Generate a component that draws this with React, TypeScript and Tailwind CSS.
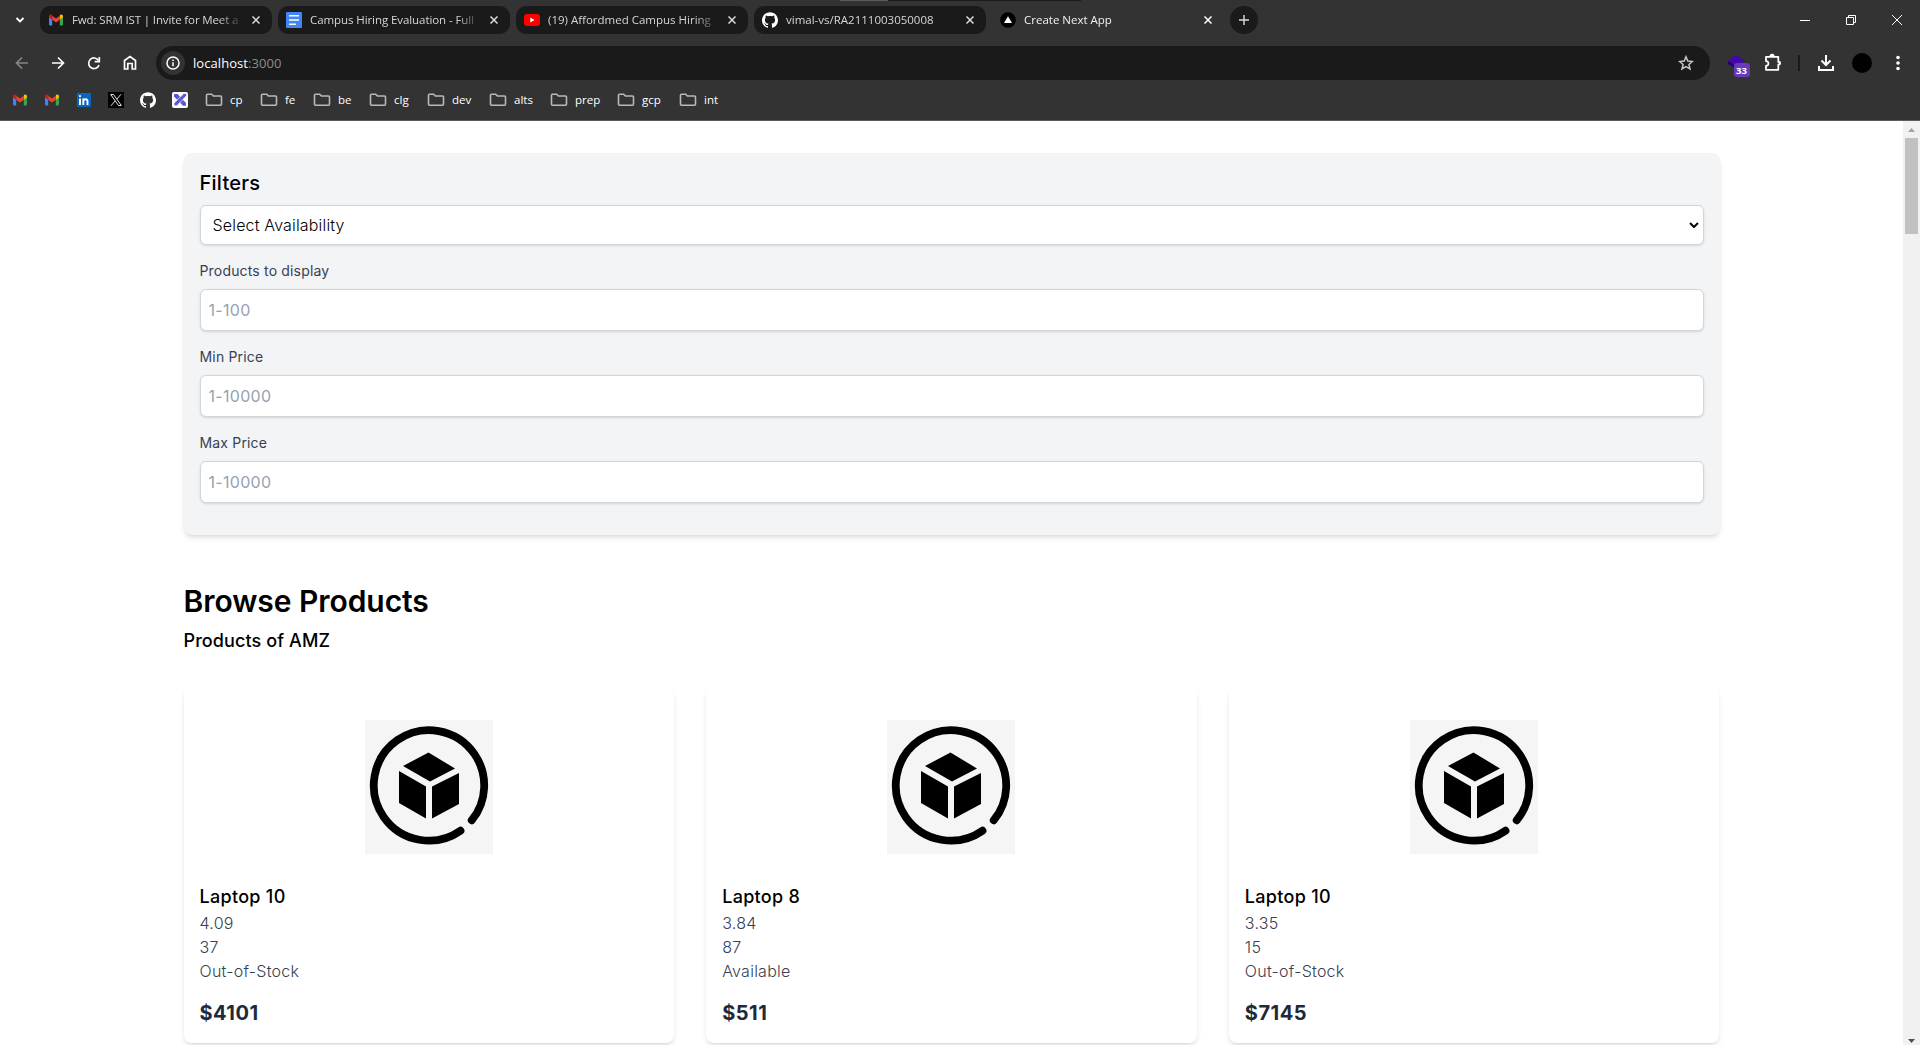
import React from "react";
import { SiGithub } from "react-icons/si";

const ui = "font-['Open_Sans','Noto_Sans',sans-serif]";

function Gmail({ size = 16 }: { size?: number }) {
  return (
    <svg width={size} height={size} viewBox="0 0 16 16" className="shrink-0">
      <path d="M1 5v7.2c0 .7.5 1.2 1.200 1.200H4.200V7.400z" fill="#4285f4" />
      <path d="M11.800 7.400v6h2c.7 0 1.200-.5 1.200-1.200V5z" fill="#34a853" />
      <path d="M11.800 3.800v4L15 5.400V4.200c0-1.500-1.700-2.300-2.800-1.400z" fill="#fbbc04" />
      <path d="M4.200 7.800v-4L8 6.600l3.800-2.800v4L8 10.600z" fill="#ea4335" />
      <path d="M1 4.200v1.200l3.200 2.400v-4l-.4-1C2.700 2 1 2.700 1 4.200z" fill="#c5221f" />
    </svg>
  );
}

function Docs() {
  return (
    <svg width="16" height="16" viewBox="0 0 16 16" className="shrink-0">
      <rect width="16" height="16" rx="1" fill="#4285f4" />
      <path d="M3 3.750h10M3 8h10M3 12.250h7" stroke="#fff" strokeWidth="1.700" />
    </svg>
  );
}

function YouTube() {
  return (
    <svg width="16" height="16" viewBox="0 0 16 16" className="shrink-0">
      <rect y="2" width="16" height="12" rx="3" fill="#f00" />
      <path d="M6.300 5.500v5L10.500 8z" fill="#fff" />
    </svg>
  );
}

function NextMark() {
  return (
    <svg width="16" height="16" viewBox="0 0 16 16" className="shrink-0">
      <circle cx="8" cy="8" r="7.800" fill="#000" />
      <path d="M8 4.300l4 6.700H4z" fill="#fff" />
    </svg>
  );
}

function Close({ color = "#dcdcdc" }: { color?: string }) {
  return (
    <svg width="8" height="8" viewBox="0 0 8 8" className="shrink-0">
      <path d="M.5.5l7 7M7.500.5l-7 7" stroke={color} strokeWidth="1.500" />
    </svg>
  );
}

function Tab({ icon, title, track, active }: { icon: React.ReactNode; title: string; track: string; active?: boolean }) {
  return (
    <div className={"flex h-7 w-[232px] items-center rounded-[10px] pl-2 pr-3 " + (active ? "" : "bg-[#1a1a1a]")}>
      {icon}
      <div className={"ml-2 h-7 w-[168px] whitespace-nowrap text-[11.5px] leading-[28px] [mask-image:linear-gradient(to_right,black_146px,transparent_172px)] " + track + (active ? " text-[#f2f2f2]" : " text-[#d6d6d6]")}>
        {title}
      </div>
      <div className="ml-auto">
        <Close color={active ? "#ffffff" : "#dcdcdc"} />
      </div>
    </div>
  );
}

function Folder({ label, width }: { label: string; width: string }) {
  return (
    <div className={"flex h-5 shrink-0 items-center " + width}>
      <svg width="18" height="16" viewBox="0 0 18 16" className="shrink-0" fill="none" stroke="#b9b9b9" strokeWidth="1.600">
        <path d="M2.500 2.300h4.200l1.600 1.700h7.200c.6 0 1 .4 1 1v7.200c0 .6-.4 1-1 1h-13c-.6 0-1-.4-1-1V3.300c0-.6.4-1 1-1z" />
      </svg>
      <span className="ml-[7px] text-[11.5px] leading-5 text-white">{label}</span>
    </div>
  );
}

function BrowserChrome() {
  return (
    <header className={"relative flex h-[121px] w-full flex-col border-b border-[#5c5c5c] bg-[#333333] " + ui}>
      <div className="absolute left-[840px] top-0 flex h-px w-[241px]">
        <div className="w-12 bg-[#5a5a5a]" />
        <div className="flex-1 bg-[#1a1a1a]" />
      </div>
      <div className="flex h-10 items-center">
        <svg width="40" height="40" viewBox="0 0 40 40" fill="none" stroke="#fff" strokeWidth="1.900">
          <path d="M16.500 18l3.500 3.500 3.500-3.500" />
        </svg>
        <div className="flex gap-[6px]">
          <Tab icon={<Gmail />} title="Fwd: SRM IST | Invite for Meet a" track="tracking-[-0.13px]" />
          <Tab icon={<Docs />} title="Campus Hiring Evaluation - Full" track="tracking-[-0.08px]" />
          <Tab icon={<YouTube />} title="(19) Affordmed Campus Hiring" track="" />
          <Tab icon={<SiGithub size={16} color="#fff" className="shrink-0" />} title="vimal-vs/RA2111003050008" track="" />
          <Tab icon={<NextMark />} title="Create Next App" track="" active />
        </div>
        <div className="ml-[6px] flex size-7 items-center justify-center rounded-full bg-[#1a1a1a]">
          <svg width="10" height="10" viewBox="0 0 10 10" stroke="#dcdcdc" strokeWidth="1.400">
            <path d="M5 0v10M0 5h10" />
          </svg>
        </div>
        <div className="ml-auto flex h-10 items-center">
          <svg width="46" height="40" viewBox="0 0 46 40" stroke="#fff"><path d="M18 20.500h10" /></svg>
          <svg width="46" height="40" viewBox="0 0 46 40" stroke="#fff" fill="none">
            <path d="M18.500 17.500h7v7h-7zM20.500 17.500v-2h7v7h-2" />
          </svg>
          <svg width="46" height="40" viewBox="0 0 46 40" stroke="#fff"><path d="M18 15l10 10M28 15l-10 10" /></svg>
        </div>
      </div>
      <div className="flex h-[46px] items-center">
        <svg width="156" height="46" viewBox="0 0 156 46" fill="none" stroke="#fff" strokeWidth="1.700">
          <path d="M28 23H16.500M22 17.500L16.500 23l5.500 5.500" stroke="#858585" />
          <path d="M52 23h11.500M58 17.500l5.500 5.500-5.500 5.500" />
          <path d="M98.500 20.500A5.300 5.300 0 1 0 99 25" />
          <path d="M99.300 17v4.600h-4.600" />
          <path d="M124.500 29v-8.500l5.500-4 5.500 4V29h-3.300v-5.500h-4.400V29z" />
        </svg>
        <div className="flex h-[34px] w-[1554px] items-center rounded-full bg-[#1a1a1a] pl-[5px] pr-4">
          <div className="flex size-6 items-center justify-center rounded-full bg-[#333333]">
            <svg width="14" height="14" viewBox="0 0 14 14" fill="none" stroke="#fff" strokeWidth="1.500">
              <circle cx="7" cy="7" r="6" />
              <path d="M7 6.300v4M7 3.600v1.500" />
            </svg>
          </div>
          <span className="ml-2 text-[13px] leading-5 tracking-[0.06px] text-white">localhost<span className="text-[#8c8c8c]">:3000</span></span>
          <svg width="16" height="16" viewBox="0 0 16 16" className="ml-auto" fill="none" stroke="#c7c7c7" strokeWidth="1.500">
            <path d="M8 1.800l1.800 4.300 4.600.4-3.500 3 1.100 4.500-4-2.400L4 14l1.100-4.500-3.500-3 4.600-.4z" />
          </svg>
        </div>
        <svg width="210" height="46" viewBox="0 0 210 46" className="shrink-0" fill="none">
          <path d="M26 15l9 6-9 5-8-5z" fill="#4306b0" />
          <path d="M18 21l8 5v3l-8-5z" fill="#22006e" />
          <rect x="24" y="23" width="16" height="14" rx="3" fill="#673ab7" />
          <text x="31.500" y="34" textAnchor="middle" fontSize="9.500" fontWeight="700" fill="#fff">33</text>
          <path d="M56 16.800h12.300v5.200c2.200-.6 2.200 3 0 2.400v5.400H56v-4c3.200.3 3.200-4.900 0-4.600z" stroke="#fff" strokeWidth="1.800" strokeLinejoin="round" />
          <path d="M60.300 16.300a1.800 1.800 0 0 1 3.600 0M69 21.500a1.700 1.700 0 0 1 0 3.200" stroke="#fff" strokeWidth="1.500" fill="#fff" />
          <path d="M89 15v16" stroke="#1a1a1a" strokeWidth="2" />
          <path d="M116 15v10M111.500 20.500l4.500 4.500 4.500-4.500M109 26v4h14v-4" stroke="#fff" strokeWidth="2" />
          <circle cx="152" cy="23" r="10" fill="#030001" />
          <circle cx="188" cy="17.500" r="1.800" fill="#fff" />
          <circle cx="188" cy="23" r="1.800" fill="#fff" />
          <circle cx="188" cy="28.500" r="1.800" fill="#fff" />
        </svg>
      </div>
      <div className="flex h-[28px] items-center pl-3">
        <div className="flex w-[193px] shrink-0 items-center gap-4">
          <Gmail />
          <Gmail />
          <svg width="16" height="16" viewBox="0 0 16 16" className="shrink-0">
            <rect x="1" y="1" width="14" height="14" rx="1" fill="#0a66c2" />
            <path d="M4 6.500V13M4 3.300v1.800M7.300 13V6.500M7.300 9.500c0-3 4.200-3 4.200 0V13" fill="none" stroke="#fff" strokeWidth="1.900" />
          </svg>
          <svg width="16" height="16" viewBox="0 0 16 16" className="shrink-0" fill="none" stroke="#e8e8e8">
            <rect width="16" height="16" fill="#000" stroke="none" />
            <path d="M2.700 2.500h2.800l7.800 11h-2.800zM13 2.300L8.800 7.100M7.200 8.900l-4.300 4.900" />
          </svg>
          <SiGithub size={16} color="#fff" className="shrink-0" />
          <svg width="16" height="16" viewBox="0 0 16 16" className="shrink-0">
            <rect width="16" height="16" rx="2" fill="#fff" />
            <path d="M2.300 2h3l2.900 4z" fill="#5b57d1" />
            <path d="M2 2h3.400l8.600 9v2.800h-3L2 4.500z" fill="#5b57d1" />
            <path d="M2 13.800v-2.600L11.800 1.500h2.700v2.300L4.800 13.800z" fill="#5b57d1" stroke="#fff" strokeWidth=".7" />
          </svg>
        </div>
        <Folder label="cp" width="w-[55px]" />
        <Folder label="fe" width="w-[53px]" />
        <Folder label="be" width="w-[56px]" />
        <Folder label="clg" width="w-[58px]" />
        <Folder label="dev" width="w-[62px]" />
        <Folder label="alts" width="w-[61px]" />
        <Folder label="prep" width="w-[67px]" />
        <Folder label="gcp" width="w-[62px]" />
        <Folder label="int" width="w-[60px]" />
      </div>
    </header>
  );
}

function Field({ label, hint }: { label: string; hint: string }) {
  return (
    <div className="mb-4">
      <label className="mb-2 block text-sm font-normal tracking-[0.17px] text-gray-700">{label}</label>
      <input className="block h-[42px] w-full rounded-md border border-gray-300 bg-white p-2 text-base tracking-[0.3px] shadow-sm placeholder:text-gray-400" placeholder={hint} />
    </div>
  );
}

function Filters() {
  return (
    <section className="rounded-lg bg-gray-100 p-4 shadow-md">
      <h2 className="mb-2 text-xl font-medium tracking-[0.25px]">Filters</h2>
      <div className="mb-4 flex h-10 items-center rounded-md border border-gray-300 bg-white pl-3 pr-1 shadow-sm">
        <span className="font-light tracking-[0.17px]">Select Availability</span>
        <svg width="10" height="6" viewBox="0 0 10 6" className="ml-auto" fill="none" stroke="#000" strokeWidth="2">
          <path d="M1 1l4 4 4-4" />
        </svg>
      </div>
      <Field label="Products to display" hint="1-100" />
      <Field label="Min Price" hint="1-10000" />
      <Field label="Max Price" hint="1-10000" />
    </section>
  );
}

function ProductImage() {
  return (
    <svg width="128" height="134" viewBox="0 0 128 134" className="mx-auto block">
      <rect width="128" height="134" fill="#f5f5f5" />
      <circle cx="64" cy="65.400" r="55.200" fill="none" stroke="#000" strokeWidth="7.800" strokeLinecap="round" pathLength="360" strokeDasharray="344 16" transform="rotate(55.200 64 65.400)" />
      <path d="M63.500 32.500L90 48.500 65 61.500 38 46z" />
      <path d="M34 51l27 15.500v32L34 83z" />
      <path d="M67 66.500L94 53v31L67 98.500z" />
    </svg>
  );
}

const products = [
  { name: "Laptop 10", rating: "4.09", discount: "37", stock: "Out-of-Stock", price: "$4101" },
  { name: "Laptop 8", rating: "3.84", discount: "87", stock: "Available", price: "$511" },
  { name: "Laptop 10", rating: "3.35", discount: "15", stock: "Out-of-Stock", price: "$7145" },
];

function ProductCard({ p }: { p: (typeof products)[number] }) {
  return (
    <article className="rounded-lg bg-white p-4 pt-[33px] shadow-md">
      <ProductImage />
      <h3 className="mt-[29px] text-lg leading-7 font-medium tracking-[0.3px]">{p.name}</h3>
      <div className="font-light tracking-[0.25px] text-gray-700">
        <p>{p.rating}</p>
        <p>{p.discount}</p>
        <p>{p.stock}</p>
      </div>
      <p className="mt-4 text-xl font-bold tracking-[0.5px] text-gray-800">{p.price}</p>
    </article>
  );
}

export default function App() {
  return (
    <div className="flex h-[1045px] w-[1920px] flex-col overflow-hidden bg-white font-[Inter,sans-serif] text-black">
      <BrowserChrome />
      <div className="flex min-h-0 flex-1">
        <main className="min-w-0 flex-1 overflow-hidden pt-8">
          <div className="mx-auto w-[1536px]">
            <Filters />
            <h1 className="mt-12 text-3xl leading-9 font-semibold tracking-[-0.05px]">Browse Products</h1>
            <h2 className="mt-2 text-lg leading-7 font-medium tracking-[0.1px]">Products of AMZ</h2>
            <div className="mt-8 grid grid-cols-3 gap-8">
              {products.map((p, i) => (
                <ProductCard key={i} p={p} />
              ))}
            </div>
          </div>
        </main>
        <div className="flex w-[17px] shrink-0 flex-col items-center bg-[#f1f1f1]">
          <div className="flex h-[17px] items-center">
            <svg width="7" height="4" viewBox="0 0 7 4" fill="#a3a3a3"><path d="M0 4l3.500-4L7 4z" /></svg>
          </div>
          <div className="h-24 w-[13px] bg-[#c1c1c1]" />
          <div className="mt-auto flex h-[6px] items-start">
            <svg width="7" height="4" viewBox="0 0 7 4" fill="#505050"><path d="M0 0l3.500 4L7 0z" /></svg>
          </div>
        </div>
      </div>
    </div>
  );
}
